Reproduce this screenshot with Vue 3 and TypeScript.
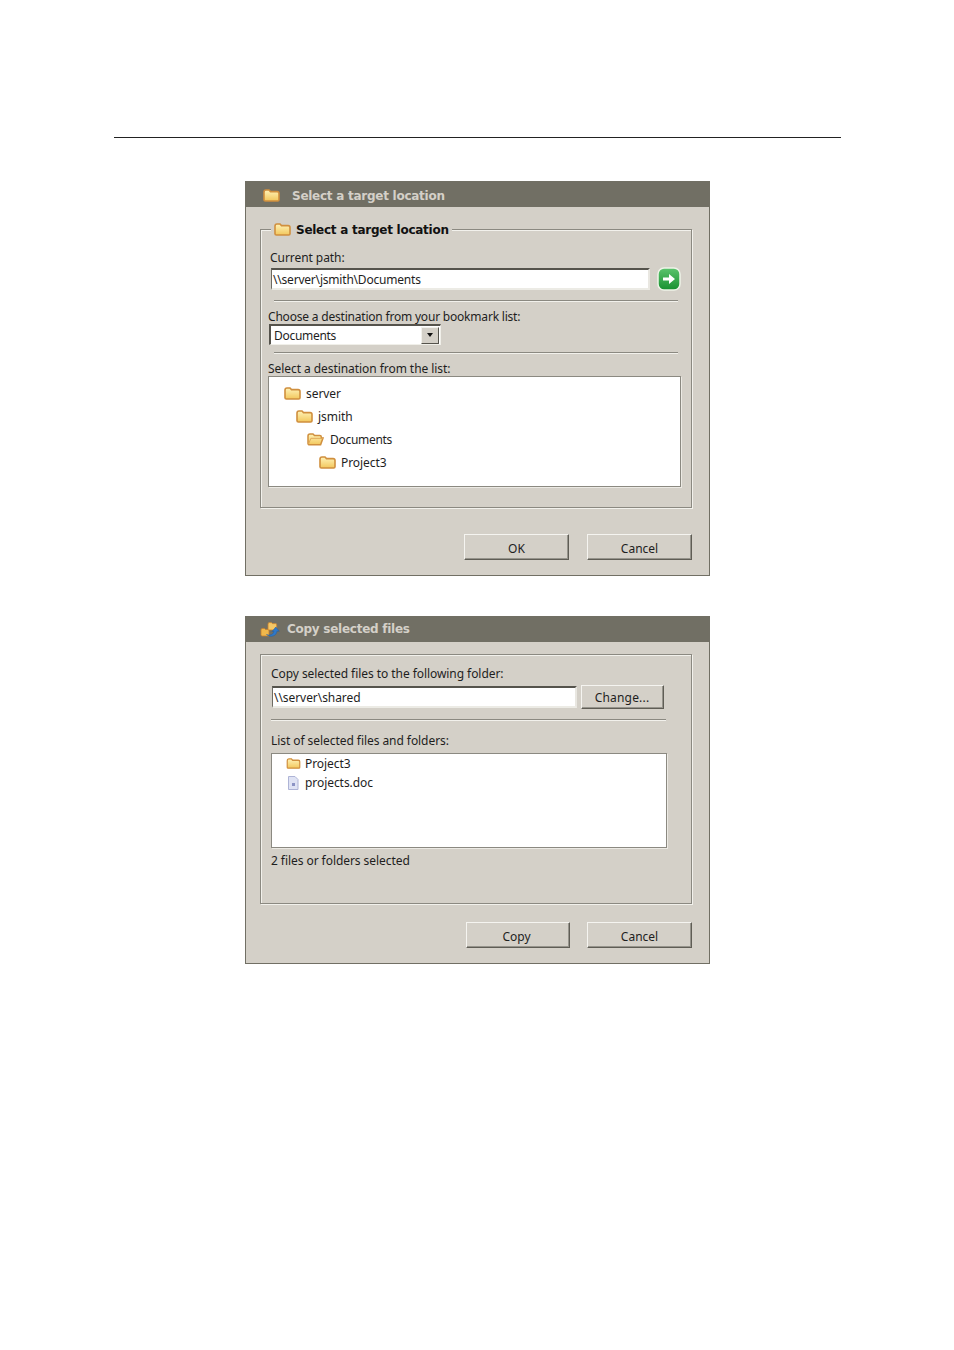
<script setup lang="ts">
interface TreeRow {
  name: string;
  indent: number;
  open?: boolean;
}

const treeRows: TreeRow[] = [
  { name: 'server', indent: 0 },
  { name: 'jsmith', indent: 12 },
  { name: 'Documents', indent: 23, open: true },
  { name: 'Project3', indent: 35 }
];
</script>

<template>
  <div class="page">
    <!-- shared icon shapes -->
    <svg class="defs" width="0" height="0" aria-hidden="true">
      <defs>
        <linearGradient id="fold" x1="0" y1="0" x2="0" y2="1">
          <stop offset="0" stop-color="#fff3b8" />
          <stop offset="1" stop-color="#f2c75c" />
        </linearGradient>
        <linearGradient id="go" x1="0" y1="0" x2="0" y2="1">
          <stop offset="0" stop-color="#5cc46e" />
          <stop offset="1" stop-color="#17902f" />
        </linearGradient>
        <symbol id="folder" viewBox="0 0 17 13">
          <path d="M1 3.2C1 2 1.8 1 3 1h3l1.5 1.6h6.6c1.2 0 1.9.8 1.9 1.9v6.3c0 .8-.6 1.2-1.3 1.2H2.4c-.8 0-1.400-.5-1.400-1.200z" fill="url(#fold)" stroke="#d08f3e" stroke-width="1.600" />
        </symbol>
        <symbol id="folder-open" viewBox="0 0 17 13">
          <path d="M1 3C1 1.900 1.800 1 3 1h3l1.500 1.500h5.300c1 0 1.500.6 1.500 1.500v1H16l-2.400 6.800H2.400C1.600 11.800 1 11.300 1 10.500z" fill="url(#fold)" stroke="#d08f3e" stroke-width="1.500" />
          <path d="M1.500 11l2.400-5.700H16" fill="none" stroke="#e0a858" stroke-width="1" />
        </symbol>
      </defs>
    </svg>

    <div class="rule"></div>

    <!-- target location dialog -->
    <div class="dialog target">
      <div class="titlebar">
        <svg class="title-icon" width="17" height="13"><use href="#folder" /></svg>
        <span class="title-text">Select a target location</span>
      </div>
      <div class="body">
        <div class="group group-target">
          <div class="legend">
            <svg width="17" height="13"><use href="#folder" /></svg>
            <span>Select a target location</span>
          </div>
          <div class="text path-label">Current path:</div>
          <div class="path-row">
            <div class="input path-input">\\server\jsmith\Documents</div>
            <div class="go">
              <svg width="24" height="24" viewBox="0 0 24 24">
                <rect x="1" y="1" width="22" height="22" rx="6" fill="url(#go)" stroke="#eef3e8" stroke-width="1.500" />
                <path d="M6 10.500h6V7l6 5-6 5v-3.500H6z" fill="#fff" />
              </svg>
            </div>
          </div>
          <div class="sep sep-target first-sep"></div>
          <div class="text label-gap bookmark-label">Choose a destination from your bookmark list:</div>
          <div class="combo">
            <span>Documents</span>
            <div class="combo-btn"><i></i></div>
          </div>
          <div class="sep sep-target second-sep"></div>
          <div class="text label-gap">Select a destination from the list:</div>
          <div class="listbox tree">
            <div v-for="row in treeRows" :key="row.name" class="tree-row" :style="{ marginLeft: row.indent + 'px' }">
              <svg width="17" height="13"><use :href="row.open ? '#folder-open' : '#folder'" /></svg>
              <span :class="{ 'open-name': row.open }">{{ row.name }}</span>
            </div>
          </div>
        </div>
        <div class="actions actions-target">
          <button class="btn wide">OK</button>
          <button class="btn wide">Cancel</button>
        </div>
      </div>
    </div>

    <!-- copy dialog -->
    <div class="dialog copy">
      <div class="titlebar">
        <svg class="copy-icon" width="20" height="17" viewBox="0 0 20 17">
          <path d="M1 9c0-1 .7-1.600 1.500-1.600h2l1 1H9V15H2.200C1.500 15 1 14.500 1 13.800z" fill="#f0b84c" stroke="#c9802c" stroke-width=".8" />
          <path d="M8 3c0-.8.6-1.400 1.400-1.400h2l1 1h3c.8 0 1.300.5 1.300 1.300V9H8z" fill="#f4c766" stroke="#c9802c" stroke-width=".8" />
          <path d="M6.500 13.500c4 1.500 7-.3 7.500-3.300l-2 .3 3.800-4.500 3.400 4.300-2.200-.2C16.500 15 11 17 6.500 13.500z" fill="#2f78c8" stroke="#1d5ea8" stroke-width=".5" />
        </svg>
        <span class="title-text copy-title">Copy selected files</span>
      </div>
      <div class="body">
        <div class="group group-copy">
          <div class="text">Copy selected files to the following folder:</div>
          <div class="folder-row">
            <div class="input folder-input">\\server\shared</div>
            <button class="btn change">Change...</button>
          </div>
          <div class="sep sep-copy"></div>
          <div class="text list-label">List of selected files and folders:</div>
          <div class="listbox files">
            <div class="file-row">
              <svg width="15" height="11" viewBox="0 0 17 13"><use href="#folder" /></svg>
              <span>Project3</span>
            </div>
            <div class="file-row">
              <svg width="15" height="14" viewBox="0 0 15 14">
                <path d="M2.500 .5H9l3 3v10H2.500z" fill="#dfe3f4" stroke="#aeb4d6" />
                <path d="M6 7h3v3H6z" fill="#8b93c4" />
              </svg>
              <span>projects.doc</span>
            </div>
          </div>
          <div class="text status">2 files or folders selected</div>
        </div>
        <div class="actions actions-copy">
          <button class="btn copy-btn">Copy</button>
          <button class="btn wide">Cancel</button>
        </div>
      </div>
    </div>
  </div>
</template>

<style>
html,
body {
  margin: 0;
  background: #fff;
}
</style>

<style scoped>
.page {
  width: 954px;
  height: 1350px;
  box-sizing: border-box;
  padding-top: 137px;
  font-family: "Noto Sans", sans-serif;
  font-size: 12px;
  letter-spacing: -0.06px;
  color: #1e1e1e;
  overflow: hidden;
}

.defs {
  position: absolute;
}

.rule {
  height: 1px;
  margin: 0 113px 0 114px;
  background: #222;
}

.dialog {
  width: 465px;
  box-sizing: border-box;
  margin-left: 245px;
  background: #d4d0c8;
  border: 1px solid #716f64;
  display: flex;
  flex-direction: column;
}

.target {
  margin-top: 43px;
  height: 395px;
}

.copy {
  margin-top: 40px;
  height: 348px;
}

.titlebar {
  height: 25px;
  flex: none;
  background: #716f64;
  display: flex;
  align-items: center;
  padding-left: 17px;
}

.title-icon {
  margin-top: 1px;
}

.title-text {
  margin-left: 12px;
  font-family: "DejaVu Sans", sans-serif;
  font-size: 12px;
  font-weight: 700;
  letter-spacing: -0.26px;
  color: #d4d0c8;
  transform: translateY(1px);
}

.copy-icon {
  margin-left: -3px;
}

.copy-title {
  margin-left: 7px;
  transform: translateY(-1px);
}

.body {
  flex: 1;
  display: flex;
  flex-direction: column;
}

.group {
  position: relative;
  box-sizing: border-box;
  margin-left: 14px;
  width: 432px;
  border: 1px solid #8b8981;
  box-shadow: 1px 1px 0 #f2f1ec, inset 1px 1px 0 #f2f1ec;
  display: flex;
  flex-direction: column;
}

.group-target {
  margin-top: 22px;
  height: 279px;
  padding: 21px 0 0 7px;
}

.group-copy {
  margin-top: 12px;
  height: 250px;
  padding: 12px 0 0 10px;
}

.legend {
  position: absolute;
  top: -9px;
  left: 10px;
  padding: 0 3px;
  height: 17px;
  background: #d4d0c8;
  display: flex;
  align-items: center;
  gap: 5px;
  font-family: "DejaVu Sans", sans-serif;
  font-size: 12px;
  font-weight: 700;
  letter-spacing: -0.26px;
  color: #111;
}

.text {
  height: 14px;
  line-height: 14px;
  white-space: nowrap;
}

.path-label {
  margin-left: 2px;
}

.bookmark-label {
  letter-spacing: -0.2px;
}

.path-row {
  margin: 2px 0 0 3px;
  display: flex;
  align-items: center;
  gap: 7px;
}

.input {
  box-sizing: border-box;
  height: 22px;
  background: #fff;
  border-style: solid;
  border-width: 2px 2px 2px 1px;
  border-color: #55534c #e9e7e1 #ecebe5 #6e6c64;
  line-height: 19px;
  padding-left: 1px;
  white-space: nowrap;
}

.path-input {
  width: 379px;
  letter-spacing: -0.2px;
}

.go {
  width: 24px;
  height: 24px;
}

.sep {
  height: 1px;
  background: #8b8981;
  box-shadow: 0 1px 0 #f2f1ec;
}

.sep-target {
  margin-left: 6px;
  width: 404px;
}

.first-sep {
  margin-top: 9px;
}

.second-sep {
  margin-top: 7px;
}

.label-gap {
  margin-top: 9px;
}

.combo {
  box-sizing: border-box;
  width: 172px;
  height: 21px;
  margin: 0 0 0 1px;
  background: #fff;
  border-style: solid;
  border-width: 2px 1px 1px 2px;
  border-color: #55534c #f0efe9 #f0efe9 #55534c;
  display: flex;
  align-items: center;
  justify-content: space-between;
  padding-left: 3px;
  letter-spacing: -0.3px;
}

.combo-btn {
  box-sizing: border-box;
  width: 18px;
  height: 17px;
  margin-right: 1px;
  background: #d4d0c8;
  border: 1px solid;
  border-color: #f2f1ec #55534c #55534c #f2f1ec;
  display: flex;
  align-items: center;
  justify-content: center;
}

.combo-btn i {
  width: 0;
  height: 0;
  border-style: solid;
  border-width: 4px 3.500px 0;
  border-color: #111 transparent transparent;
}

.listbox {
  box-sizing: border-box;
  background: #fff;
  border: 1px solid #8b8981;
  box-shadow: 1px 1px 0 #eceae4;
}

.tree {
  width: 413px;
  height: 111px;
  padding: 7px 0 0 15px;
  display: flex;
  flex-direction: column;
  gap: 5px;
}

.tree-row {
  height: 18px;
  display: flex;
  align-items: center;
  gap: 5px;
}

.tree-row .open-name {
  margin-left: 1px;
  letter-spacing: -0.3px;
}

.actions {
  margin-top: auto;
  margin-right: 17px;
  display: flex;
  justify-content: flex-end;
}

.actions-target {
  margin-bottom: 15px;
  gap: 18px;
}

.actions-copy {
  margin-bottom: 15px;
  gap: 17px;
}

.btn {
  box-sizing: border-box;
  height: 26px;
  padding: 2px 0 0;
  background: #d4d0c8;
  border: 1px solid;
  border-color: #f5f4f0 #5f5d55 #5f5d55 #f5f4f0;
  box-shadow: inset -1px -1px 0 #96948c;
  font-family: inherit;
  font-size: 12px;
  color: #1e1e1e;
}

.wide {
  width: 105px;
}

.copy-btn {
  width: 104px;
  padding-right: 3px;
}

.folder-row {
  margin: 4px 0 0 1px;
  display: flex;
  align-items: center;
  gap: 4px;
}

.folder-input {
  width: 305px;
}

.change {
  width: 83px;
  height: 24px;
  padding: 0 1px 0 0;
  letter-spacing: 0.2px;
}

.sep-copy {
  margin-top: 10px;
  width: 395px;
}

.list-label {
  margin-top: 14px;
}

.files {
  width: 396px;
  height: 95px;
  margin-top: 5px;
  padding: 0 0 0 14px;
  display: flex;
  flex-direction: column;
  gap: 0;
}

.file-row {
  height: 19px;
  display: flex;
  align-items: center;
  gap: 4px;
}

.status {
  margin-top: 6px;
}
</style>
